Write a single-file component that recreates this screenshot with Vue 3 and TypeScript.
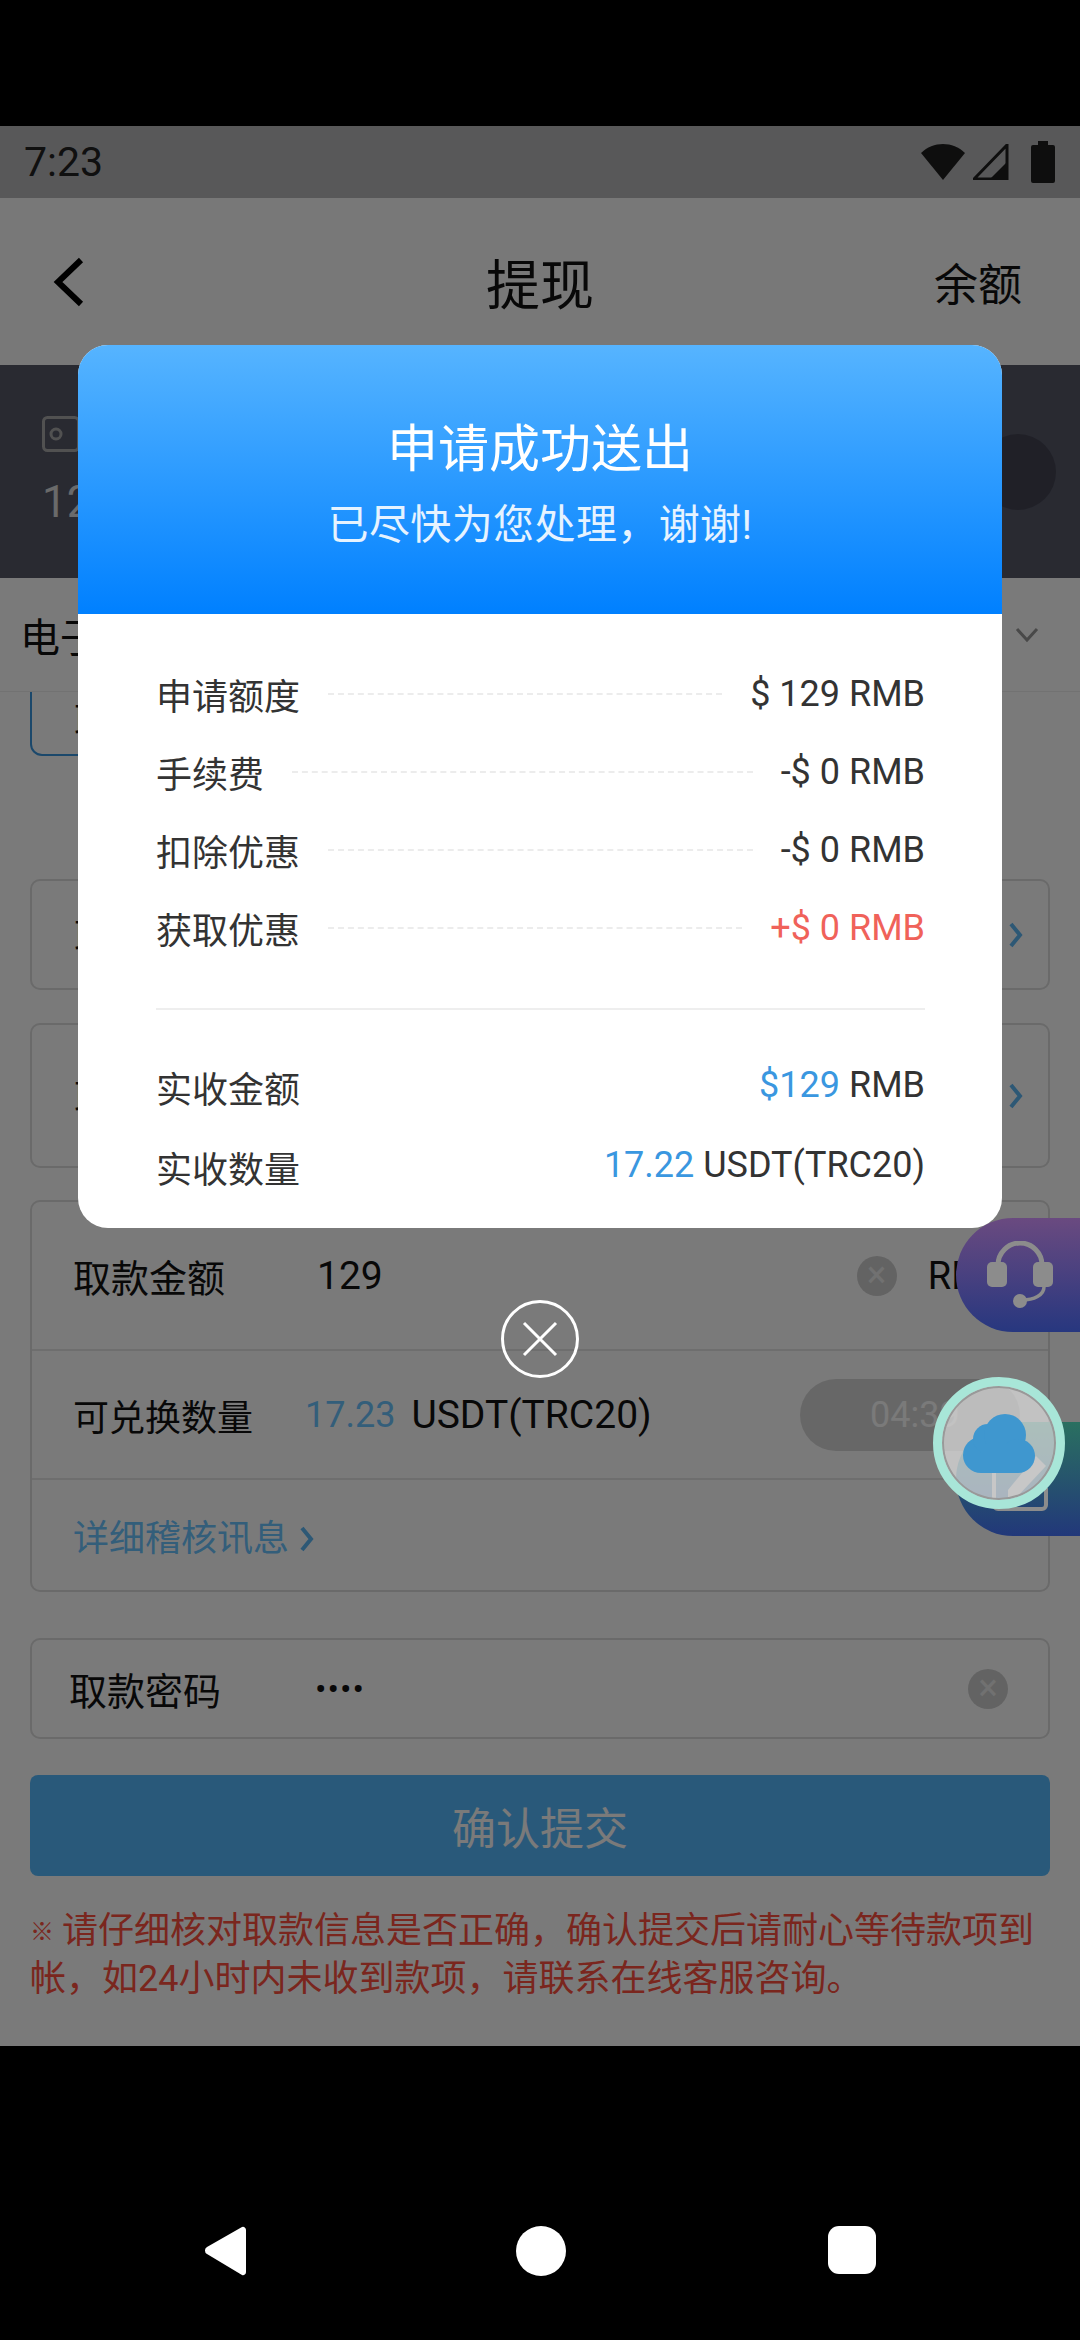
<template>
  <div class="device">
    <div class="screen">
      <div class="status">
        <span class="time">7:23</span>
        <div class="status-icons">
          <svg width="44" height="36" viewBox="0 0 44 36"><path d="M0 9C6 3 14 0 22 0s16 3 22 9L22 36z" fill="#1f1f1f" /></svg>
          <svg width="36" height="36" viewBox="0 0 36 36"><path d="M34 1v34H1z" fill="none" stroke="#1f1f1f" stroke-width="3" /><path d="M34 18v17H17z" fill="#1f1f1f" /></svg>
          <svg width="24" height="42" viewBox="0 0 24 42"><path d="M7 0h10v4h5a2 2 0 0 1 2 2v34a2 2 0 0 1-2 2H2a2 2 0 0 1-2-2V6a2 2 0 0 1 2-2h5z" fill="#1f1f1f" /></svg>
        </div>
      </div>

      <header class="topbar">
        <svg class="back" width="34" height="50" viewBox="0 0 34 50"><path d="M29 3 6 25l23 22" fill="none" stroke="#000" stroke-width="6" /></svg>
        <h1>提现</h1>
        <span class="topbar-link">余额</span>
      </header>

      <div class="wallet">
        <div class="wallet-info">
          <svg width="38" height="36" viewBox="0 0 38 36"><rect x="1.5" y="1.5" width="35" height="33" rx="4" fill="none" stroke="#aaa" stroke-width="3" /><circle cx="14" cy="18" r="5" fill="none" stroke="#aaa" stroke-width="3" /></svg>
          <span class="wallet-num">12</span>
        </div>
        <div class="wallet-dot"></div>
      </div>

      <div class="selector">
        <span class="peek peek-title">电子</span>
        <svg width="24" height="16" viewBox="0 0 24 16"><path d="M2 2l10 11L22 2" fill="none" stroke="#999" stroke-width="3" /></svg>
      </div>

      <div class="content">
        <div class="tab-row"><div class="tab"><span class="peek peek-label">取</span></div></div>

        <div class="box box-pick">
          <span class="peek peek-label">取</span>
          <svg class="chev" width="16" height="28" viewBox="0 0 16 28"><path d="M3 3l9 11-9 11" fill="none" stroke="#5fb8f5" stroke-width="4" /></svg>
        </div>
        <div class="box box-pick box-tall">
          <span class="peek peek-label">取</span>
          <svg class="chev" width="16" height="28" viewBox="0 0 16 28"><path d="M3 3l9 11-9 11" fill="none" stroke="#5fb8f5" stroke-width="4" /></svg>
        </div>

        <div class="box box-form">
          <div class="form-row amount">
            <span class="form-label">取款金额</span>
            <span class="form-val">129</span>
            <span class="clear"></span>
            <span class="unit">RMB</span>
          </div>
          <div class="form-row convert">
            <span class="form-label">可兑换数量</span>
            <span class="num-blue">17.23</span>
            <span class="form-val">USDT(TRC20)</span>
            <span class="timer">04:39</span>
          </div>
          <div class="form-row detail">
            <span>详细稽核讯息</span>
            <svg width="16" height="28" viewBox="0 0 16 28"><path d="M3 3l9 11-9 11" fill="none" stroke="#5fb8f5" stroke-width="4" /></svg>
          </div>
        </div>

        <div class="box box-pass">
          <span class="form-label">取款密码</span>
          <span class="dots">••••</span>
          <span class="clear"></span>
        </div>

        <button class="submit">确认提交</button>

        <p class="note"><span class="note-mark">※</span>请仔细核对取款信息是否正确，确认提交后请耐心等待款项到帐，如24小时内未收到款项，请联系在线客服咨询。</p>
      </div>

      <div class="scrim"></div>

      <!-- floating buttons keep their colour above the dim layer -->
      <div class="float-tab tab-service">
        <svg width="66" height="68" viewBox="0 0 66 68">
          <path d="M11 26V24a22 22 0 0 1 44 0v2" fill="none" stroke="#8c8c8c" stroke-width="5" />
          <rect x="0" y="21" width="20" height="25" rx="5" fill="#8c8c8c" />
          <rect x="46" y="21" width="20" height="25" rx="5" fill="#8c8c8c" />
          <path d="M57 46c0 8-10 13-22 13" fill="none" stroke="#8c8c8c" stroke-width="3.5" />
          <circle cx="33" cy="60" r="7" fill="#8c8c8c" />
        </svg>
      </div>
      <div class="float-tab tab-edit"></div>
      <svg class="edit-icon" width="60" height="64" viewBox="0 0 60 64">
        <path d="M30 3H8a4 4 0 0 0-4 4v50a4 4 0 0 0 4 4h44a4 4 0 0 0 4-4V40" fill="none" stroke="#8c8c8c" stroke-width="4" />
        <path d="M18 42 46 8l10 10-30 32H18z" fill="#8c8c8c" />
      </svg>
      <div class="cloud-btn">
        <svg width="72" height="59" viewBox="0 0 72 59">
          <g fill="#3f97cf">
            <circle cx="18" cy="41" r="18" />
            <circle cx="25" cy="25" r="15" />
            <circle cx="42" cy="21" r="21" />
            <circle cx="55" cy="42" r="17" />
            <rect x="18" y="30" width="37" height="29" />
          </g>
        </svg>
      </div>

      <div class="modal">
        <div class="modal-head">
          <div class="modal-title">申请成功送出</div>
          <div class="modal-sub">已尽快为您处理，谢谢!</div>
        </div>
        <div class="modal-body">
          <div class="fee-list">
            <div v-for="r in fees" :key="r.label" class="fee-row">
              <span class="fee-label">{{ r.label }}</span>
              <span class="fee-dash"></span>
              <span class="fee-val" :class="{ red: r.red }">{{ r.value }}</span>
            </div>
          </div>
          <div class="divider"></div>
          <div class="fee-row total">
            <span class="fee-label">实收金额</span>
            <span class="fee-val"><em>$129</em> RMB</span>
          </div>
          <div class="fee-row total">
            <span class="fee-label">实收数量</span>
            <span class="fee-val"><em>17.22</em> USDT(TRC20)</span>
          </div>
        </div>
      </div>

      <div class="modal-close">
        <svg width="40" height="40" viewBox="0 0 40 40"><path d="M4 4l32 32M36 4 4 36" stroke="#fff" stroke-width="3" /></svg>
      </div>
    </div>

    <nav class="navbar">
      <svg width="44" height="52" viewBox="0 0 44 52"><path d="M39 2 4 22a4 4 0 0 0 0 7l35 21a3 3 0 0 0 4-3V5a3 3 0 0 0-4-3z" fill="#fff" /></svg>
      <span class="nav-circle"></span>
      <span class="nav-square"></span>
    </nav>
  </div>
</template>

<script setup lang="ts">
interface FeeRow {
  label: string
  value: string
  red?: boolean
}

const fees: FeeRow[] = [
  { label: '申请额度', value: '$ 129 RMB' },
  { label: '手续费', value: '-$ 0 RMB' },
  { label: '扣除优惠', value: '-$ 0 RMB' },
  { label: '获取优惠', value: '+$ 0 RMB', red: true },
]
</script>

<style>
html, body {
  margin: 0;
  background: #000;
}
</style>

<style scoped>
.device {
  width: 1080px;
  height: 2340px;
  background: #000;
  padding-top: 126px;
  box-sizing: border-box;
  display: flex;
  flex-direction: column;
  font-family: Roboto, "Noto Sans CJK SC", sans-serif;
  color: #111;
}

.screen {
  position: relative;
  height: 1920px;
  background: #fff;
  overflow: hidden;
  flex-shrink: 0;
}

.status {
  height: 72px;
  background: #b9b9bb;
  display: flex;
  align-items: center;
  justify-content: space-between;
  padding: 0 25px 0 24px;
}

.time {
  font-size: 41px;
  color: #222;
}

.status-icons {
  display: flex;
  align-items: center;
  gap: 8px;
}

.status-icons svg:last-child {
  margin-left: 14px;
}

.topbar {
  height: 167px;
  position: relative;
  background: #fafafa;
  display: flex;
  align-items: center;
  justify-content: center;
}

.topbar h1 {
  margin: 0;
  font-size: 54px;
  font-weight: 400;
}

.back {
  position: absolute;
  left: 52px;
  top: 59px;
}

.topbar-link {
  position: absolute;
  right: 58px;
  font-size: 44px;
}

.wallet {
  height: 213px;
  background: #565868;
  display: flex;
  align-items: center;
  justify-content: space-between;
  padding: 0 30px 0 42px;
}

.wallet-info {
  display: flex;
  flex-direction: column;
  gap: 24px;
  color: #ddd;
  font-size: 44px;
}

.wallet-dot {
  width: 76px;
  height: 76px;
  border-radius: 50%;
  background: #434452;
  margin-right: -6px;
}

.selector {
  height: 114px;
  background: #fff;
  display: flex;
  align-items: center;
  justify-content: space-between;
  padding: 0 41px 0 20px;
  font-size: 40px;
  border-bottom: 1px solid #eee;
  box-sizing: border-box;
}

/* labels that mostly sit behind the dialog: only the sliver beside it shows */
.peek {
  display: block;
  overflow: hidden;
  white-space: nowrap;
  color: #111;
}

.peek-title {
  width: 58px;
}

.peek-label {
  width: 6px;
  font-size: 38px;
}

.content {
  padding: 0 30px;
  background: #fff;
}

.tab-row {
  height: 187px;
}

.tab {
  width: 200px;
  height: 64px;
  box-sizing: border-box;
  border: 2px solid #3a97e0;
  border-top: none;
  border-radius: 0 0 12px 12px;
  padding-left: 42px;
  line-height: 60px;
}

.box {
  border: 2px solid #ddd;
  border-radius: 10px;
  box-sizing: border-box;
}

.box-pick {
  height: 111px;
  margin-bottom: 33px;
  display: flex;
  align-items: center;
  justify-content: space-between;
  padding: 0 24px 0 42px;
}

.box-tall {
  height: 145px;
  margin-bottom: 32px;
}

.box-form {
  height: 392px;
  display: flex;
  flex-direction: column;
}

.form-row {
  display: flex;
  align-items: center;
  padding-left: 41px;
}

.amount {
  height: 147px;
  border-bottom: 2px solid #e6e6e6;
}

.convert {
  height: 129px;
  border-bottom: 2px solid #e6e6e6;
  box-sizing: border-box;
}

.detail {
  flex: 1;
  gap: 10px;
  font-size: 36px;
  color: #6cc4ff;
}

.detail svg {
  margin-top: 8px;
}

.form-label {
  font-size: 38px;
  color: #111;
}

.amount .form-label {
  width: 244px;
}

.form-val {
  font-size: 39px;
}

.amount .clear {
  margin-left: auto;
}

.unit {
  font-size: 38px;
  margin: 0 40px 0 31px;
}

.clear {
  width: 40px;
  height: 40px;
  border-radius: 50%;
  background: #d0d0d0;
  flex-shrink: 0;
  position: relative;
}

.clear::before {
  content: "×";
  position: absolute;
  inset: 0;
  color: #ededed;
  font-size: 36px;
  line-height: 38px;
  text-align: center;
}

.convert .form-label {
  width: 232px;
  font-size: 36px;
}

.num-blue {
  color: #6cc4ff;
  font-size: 36px;
  margin-right: 16px;
}

.timer {
  margin-left: auto;
  width: 220px;
  height: 72px;
  border-radius: 36px;
  background: #d8d8d8;
  color: #fff;
  font-size: 36px;
  display: flex;
  align-items: center;
  padding-left: 70px;
  box-sizing: border-box;
  margin-right: 28px;
}

.box-pass {
  height: 101px;
  margin-top: 46px;
  display: flex;
  align-items: center;
  padding: 0 40px 0 37px;
}

.box-pass .form-label {
  width: 246px;
}

.dots {
  font-size: 34px;
  letter-spacing: 1px;
}

.box-pass .clear {
  margin-left: auto;
}

.submit {
  display: block;
  width: 100%;
  height: 101px;
  margin-top: 36px;
  border: none;
  border-radius: 8px;
  background: #57bbff;
  color: #fff;
  font-family: inherit;
  font-size: 44px;
}

.note {
  margin: 32px 0 0;
  font-size: 36px;
  line-height: 47px;
  color: #ff5040;
}

.note-mark {
  display: inline-block;
  width: 32px;
  font-size: 24px;
  vertical-align: 3px;
}

.scrim {
  position: absolute;
  inset: 0;
  background: rgba(0, 0, 0, 0.52);
}

.float-tab {
  position: absolute;
  left: 956px;
  width: 124px;
  height: 114px;
  border-radius: 57px 0 0 57px;
}

.tab-service {
  top: 1092px;
  background: linear-gradient(#6a4a80, #27377f);
  display: flex;
  align-items: center;
  padding-left: 31px;
  box-sizing: border-box;
}

.tab-edit {
  top: 1296px;
  background: linear-gradient(#2a7060, #22387a);
}

.edit-icon {
  position: absolute;
  left: 990px;
  top: 1322px;
}

.cloud-btn {
  position: absolute;
  left: 933px;
  top: 1251px;
  width: 132px;
  height: 132px;
  box-sizing: border-box;
  border-radius: 50%;
  border: 9px solid #a8e6d8;
  background: rgba(222, 222, 222, 0.72);
  box-shadow: inset 0 0 0 2px #999;
  display: flex;
  align-items: center;
  justify-content: center;
}

.modal {
  position: absolute;
  left: 78px;
  top: 219px;
  width: 924px;
  height: 883px;
  background: #fff;
  border-radius: 30px;
  overflow: hidden;
}

.modal-head {
  height: 269px;
  box-sizing: border-box;
  padding-top: 70px;
  background: linear-gradient(#56b4ff, #0080ff);
  color: #fff;
  text-align: center;
}

.modal-title {
  font-size: 51px;
  line-height: 70px;
}

.modal-sub {
  font-size: 41px;
  line-height: 60px;
  margin-top: 10px;
  letter-spacing: 0.4px;
  color: #e6f3ff;
}

.modal-body {
  padding: 41px 77px 0 78px;
}

.fee-row {
  display: flex;
  align-items: center;
  height: 78px;
  gap: 28px;
  color: #333;
}

.fee-label {
  font-size: 36px;
  padding-top: 7px;
  line-height: 50px;
}

.fee-dash {
  flex: 1;
  border-top: 2px dashed #ececec;
}

.fee-val {
  font-size: 36px;
  margin-left: auto;
  line-height: 50px;
}

.fee-val em {
  font-style: normal;
  color: #3a97e0;
}

.fee-val.red {
  color: #f0625a;
}

.divider {
  height: 2px;
  background: #eee;
  margin: 41px 0 37px;
}

.total {
  height: 80px;
}

.total .fee-val {
  margin-top: -5px;
}

.modal-close {
  position: absolute;
  left: 501px;
  top: 1174px;
  width: 78px;
  height: 78px;
  box-sizing: border-box;
  border: 3px solid #fff;
  border-radius: 50%;
  display: flex;
  align-items: center;
  justify-content: center;
}

.navbar {
  position: relative;
  flex: 1;
  background: #000;
}

.navbar svg {
  position: absolute;
  left: 203px;
  top: 179px;
}

.nav-circle {
  position: absolute;
  left: 516px;
  top: 180px;
  width: 50px;
  height: 50px;
  border-radius: 50%;
  background: #fff;
}

.nav-square {
  position: absolute;
  left: 828px;
  top: 180px;
  width: 48px;
  height: 48px;
  border-radius: 11px;
  background: #fff;
}
</style>
